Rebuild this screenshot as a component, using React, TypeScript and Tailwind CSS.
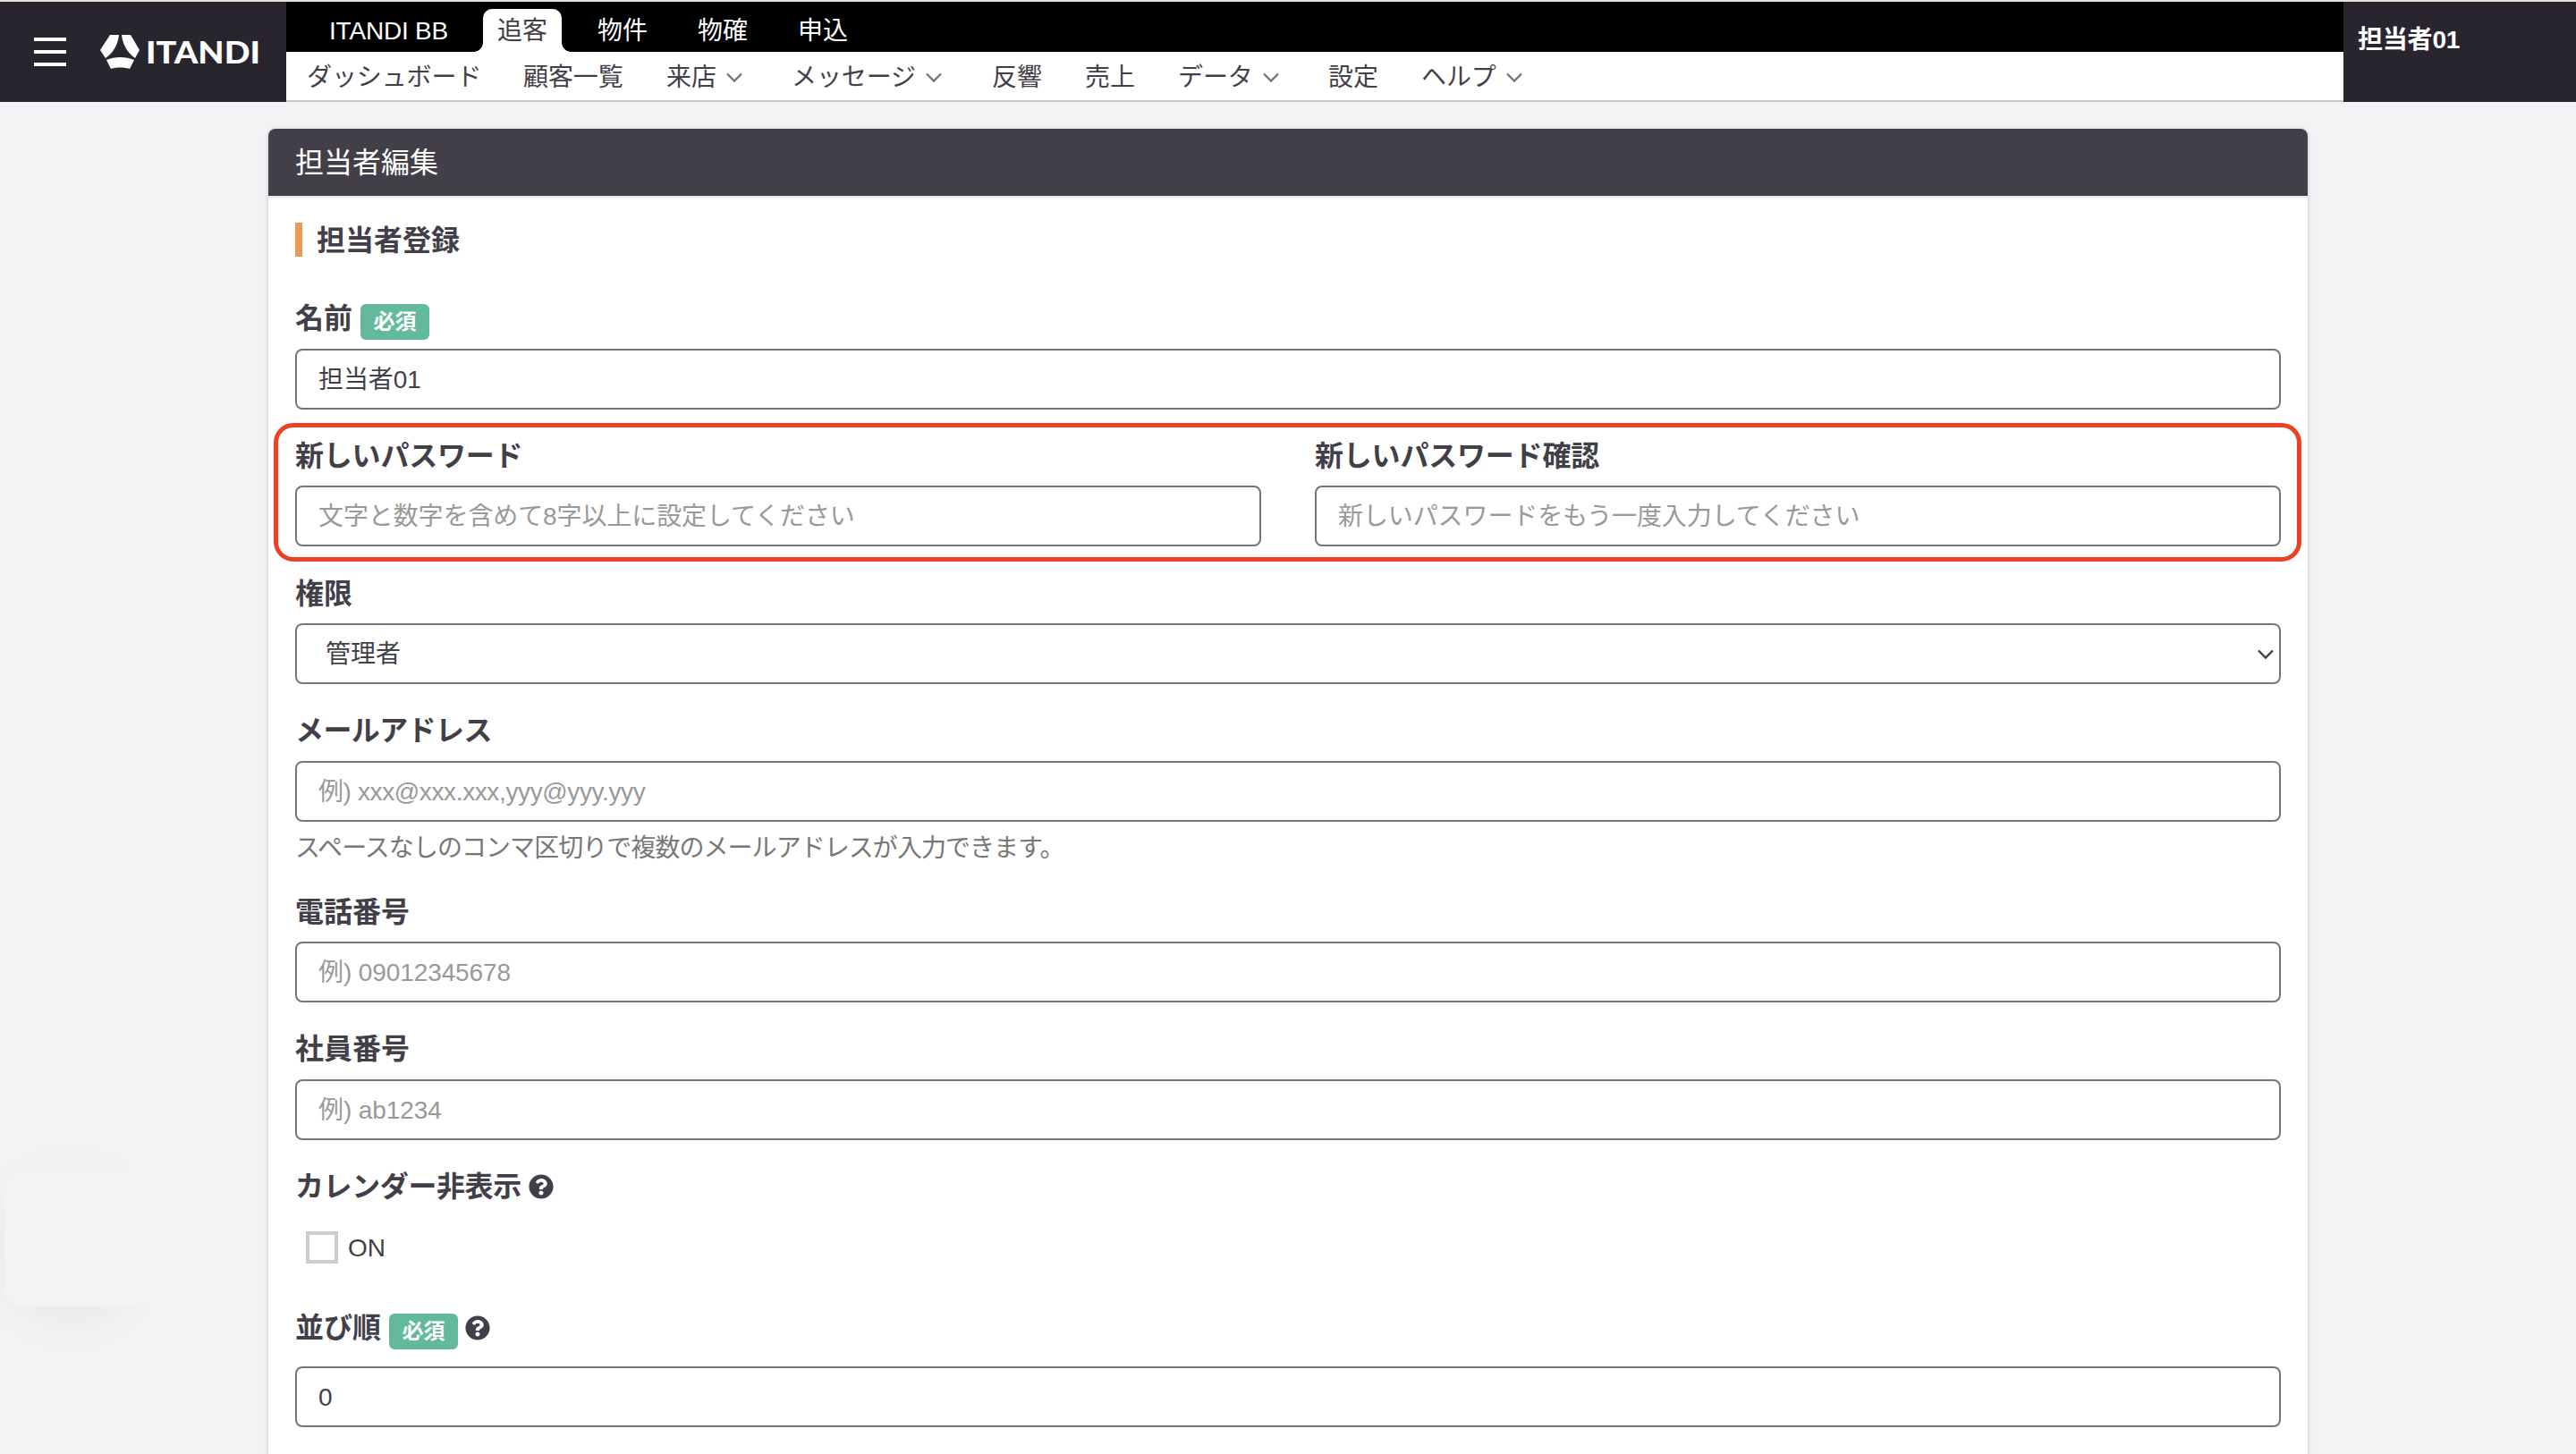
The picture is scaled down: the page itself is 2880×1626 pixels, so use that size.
import type { ReactNode } from 'react'
import { FaQuestionCircle } from 'react-icons/fa'

interface NavItem {
  label: string
  width: string
  menu?: boolean
}

const PRODUCTS = ['ITANDI BB', '追客', '物件', '物確', '申込']
const ACTIVE_PRODUCT = '追客'

const NAV: NavItem[] = [
  { label: 'ダッシュボード', width: 'w-[242px]' },
  { label: '顧客一覧', width: 'w-[160px]' },
  { label: '来店', width: 'w-[140px]', menu: true },
  { label: 'メッセージ', width: 'w-[224px]', menu: true },
  { label: '反響', width: 'w-[104px]' },
  { label: '売上', width: 'w-[104px]' },
  { label: 'データ', width: 'w-[168px]', menu: true },
  { label: '設定', width: 'w-[104px]' },
  { label: 'ヘルプ', width: 'w-[120px]', menu: true },
]

function Chevron({ className }: { className: string }) {
  return (
    <svg viewBox="0 0 18 12" className={className} fill="none" stroke="currentColor" strokeWidth="2.4">
      <path d="M1 1.5 L9 9.5 L17 1.5" />
    </svg>
  )
}

function Logo() {
  return (
    <svg width="180" height="44" viewBox="0 0 180 44" className="text-white" fill="currentColor">
      <path d="M11 3 H21 C20 13 15 23 6 29 L0 20 Z" />
      <path d="M24 3 H34 L44 20 L39 29 C30 23 25 13 24 3 Z" />
      <path d="M7 31 C16 27 29 27 38 31 L33 41 C27 39 18 39 12 41 Z" />
      <text
        x="51"
        y="35"
        textLength="128"
        lengthAdjust="spacingAndGlyphs"
        className="font-[Lato] text-[35px] font-black"
      >
        ITANDI
      </text>
    </svg>
  )
}

function Header() {
  return (
    <header className="flex h-[114px] border-t-2 border-[#ecdfd7] bg-white">
      <div className="flex w-[320px] items-center bg-[#28252f] pl-[38px]">
        <div className="flex w-9 flex-col gap-[10px]">
          <span className="h-1 bg-white" />
          <span className="h-1 bg-white" />
          <span className="h-1 bg-white" />
        </div>
        <div className="ml-[38px]">
          <Logo />
        </div>
      </div>

      <div className="flex flex-1 flex-col">
        <nav className="flex h-14 items-end gap-6 bg-black pl-8 text-[28px] leading-[49px]">
          {PRODUCTS.map((name) =>
            name === ACTIVE_PRODUCT ? (
              <div key={name} className="relative h-12 rounded-t-[10px] bg-white px-4 text-[#433f49]">
                {name}
                {/* Flared corners where the tab meets the bar below */}
                <span className="absolute bottom-0 -left-[10px] size-[10px] bg-[radial-gradient(circle_at_0_0,#000_9.5px,#fff_10px)]" />
                <span className="absolute bottom-0 -right-[10px] size-[10px] bg-[radial-gradient(circle_at_100%_0,#000_9.5px,#fff_10px)]" />
              </div>
            ) : (
              <div
                key={name}
                className="h-12 whitespace-nowrap px-4 text-white first:pr-[15px] first:tracking-[-0.2px]"
              >
                {name}
              </div>
            )
          )}
        </nav>
        <nav className="flex h-14 items-center border-b-2 border-[#c8c7ca] pl-[23px] pt-[3px] text-[28px]">
          {NAV.map((item) => (
            <div
              key={item.label}
              className={`flex shrink-0 items-center gap-[11px] whitespace-nowrap tracking-[-0.1px] ${item.width}`}
            >
              {item.label}
              {item.menu && <Chevron className="h-3 w-[18px] shrink-0 text-[#77757c]" />}
            </div>
          ))}
        </nav>
      </div>

      <div className="w-[260px] bg-[#28252f] pl-4 pt-[22px] text-[28px] font-bold leading-[42px] tracking-[-0.2px] text-white">
        担当者01
      </div>
    </header>
  )
}

function Required() {
  return (
    <span className="ml-[9px] mt-2 flex h-10 items-center rounded-md bg-[#62b99c] px-[14.5px] text-[24px] font-bold tracking-normal text-white">
      必須
    </span>
  )
}

function Label({ children, className = '' }: { children: ReactNode; className?: string }) {
  return (
    <div className={`flex h-12 items-center whitespace-nowrap text-[32px] font-bold ${className}`}>{children}</div>
  )
}

function Input({ value, placeholder }: { value?: string; placeholder?: string }) {
  return (
    <div className="flex h-[68px] items-center rounded-lg border-2 border-[#77757c] bg-white px-6 pt-[2px] text-[28px] tracking-[-0.1px]">
      {value ?? <span className="text-[#999]">{placeholder}</span>}
    </div>
  )
}

function Help() {
  return <FaQuestionCircle className="ml-2 size-7 text-[#433f49]" />
}

export default function App() {
  return (
    <div className="relative flex h-[1626px] w-[2880px] flex-col overflow-hidden bg-[#f3f3f6] font-['Liberation_Sans','Noto_Sans_CJK_JP',sans-serif] text-[#433f49]">
      <Header />

      {/* Floating widget on the left edge */}
      <div className="absolute left-0 top-[1270px] h-[244px] w-[200px] bg-[radial-gradient(ellipse_115px_115px_at_78px_125px,#e8e8ea_0%,#eaeaec_57%,#f0f0f2_78%,#f3f3f6_100%)]">
        <div className="ml-[5px] mt-[35px] h-[156px] rounded-l-[22px] bg-[#f3f3f6]" />
      </div>

      <main className="mx-[300px] mt-[30px] h-[1500px] shrink-0 rounded-t-lg bg-white shadow-[0_1px_5px_rgba(0,0,0,0.2)]">
        <div className="flex h-[77px] items-center rounded-t-lg border-b-2 border-[#e8e7eb] bg-[#433f49] pl-[30px] text-[32px] text-white">
          担当者編集
        </div>

        <form className="flex flex-col px-[30px] pt-7">
          <h2 className="flex h-[38px] items-center border-l-8 border-[#f09851] pl-4 pt-[2px] text-[32px] font-bold">
            担当者登録
          </h2>

          <div className="mt-[45px] flex flex-col gap-[10px]">
            <Label>名前<Required /></Label>
            <Input value="担当者01" />
          </div>

          <div className="relative mt-[27px] grid grid-cols-2 gap-[60px]">
            <div className="absolute -left-6 -right-[23px] -bottom-[17px] -top-3 rounded-[22px] border-[5px] border-[#eb4127]" />
            <div className="flex flex-col gap-[10px]">
              <Label className="pt-[2px] tracking-[-0.2px]">新しいパスワード</Label>
              <Input placeholder="文字と数字を含めて8字以上に設定してください" />
            </div>
            <div className="flex flex-col gap-[10px]">
              <Label className="pt-[2px] tracking-[-0.2px]">新しいパスワード確認</Label>
              <Input placeholder="新しいパスワードをもう一度入力してください" />
            </div>
          </div>

          <div className="mt-7 flex flex-col gap-[10px]">
            <Label className="pt-[2px]">権限</Label>
            <div className="flex h-[68px] items-center justify-between rounded-lg border-2 border-[#77757c] pl-8 pr-[6px] pt-[2px] text-[28px]">
              管理者
              <Chevron className="h-3 w-[18px] text-[#433f49]" />
            </div>
          </div>

          <div className="mt-7 flex flex-col gap-[10px]">
            <Label className="tracking-[-0.6px]">メールアドレス</Label>
            <div className="flex h-[68px] items-center rounded-lg border-2 border-[#77757c] px-6 pt-[2px] text-[28px] tracking-[-0.38px] text-[#999]">
              例) xxx@xxx.xxx,yyy@yyy.yyy
            </div>
          </div>
          <p className="mt-[9px] h-[41px] text-[28px] leading-[42px] tracking-[-0.95px] text-[#777]">
            スペースなしのコンマ区切りで複数のメールアドレスが入力できます。
          </p>

          <div className="mt-[26px] flex flex-col gap-[10px]">
            <Label className="pt-[2px]">電話番号</Label>
            <Input placeholder="例) 09012345678" />
          </div>

          <div className="mt-7 flex flex-col gap-[10px]">
            <Label>社員番号</Label>
            <Input placeholder="例) ab1234" />
          </div>

          <div className="mt-7">
            <Label className="tracking-[-0.4px]">カレンダー非表示<Help /></Label>
            <div className="ml-3 mt-[26px] flex h-9 items-center gap-[11px] text-[28px]">
              <span className="size-9 border-4 border-[#ccc]" />
              <span className="pt-px">ON</span>
            </div>
          </div>

          <div className="mt-12 flex flex-col gap-[19px]">
            <Label>並び順<Required /><Help /></Label>
            <Input value="0" />
          </div>
        </form>
      </main>
    </div>
  )
}
